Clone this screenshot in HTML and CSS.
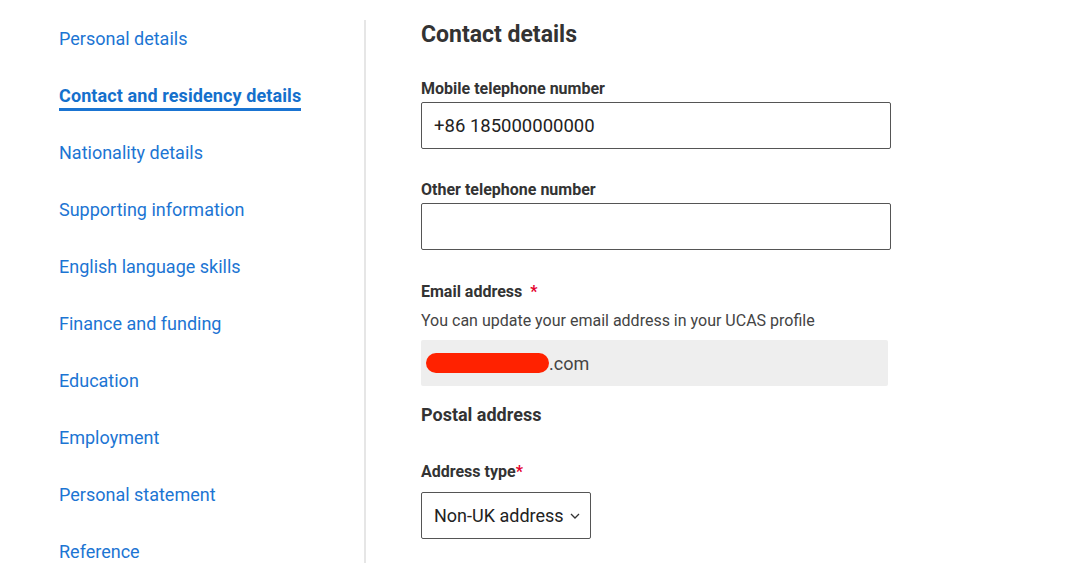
FILE: index.html
```html
<!DOCTYPE html>
<html>
<head>
<meta charset="utf-8">
<link rel="stylesheet" href="styles.css">
</head>
<body>
<div class="page">
  <nav class="sidebar">
    <ul class="nav">
      <li><a href="#">Personal details</a></li>
      <li class="active"><a href="#">Contact and residency details</a></li>
      <li><a href="#">Nationality details</a></li>
      <li><a href="#">Supporting information</a></li>
      <li><a href="#">English language skills</a></li>
      <li><a href="#">Finance and funding</a></li>
      <li><a href="#">Education</a></li>
      <li><a href="#">Employment</a></li>
      <li><a href="#">Personal statement</a></li>
      <li><a href="#">Reference</a></li>
    </ul>
  </nav>
  <main class="content">
    <h1 class="title">Contact details</h1>
    <div class="field">
      <label class="label">Mobile telephone number</label>
      <div class="input">+86 185000000000</div>
    </div>
    <div class="field">
      <label class="label">Other telephone number</label>
      <div class="input"></div>
    </div>
    <div class="field email">
      <label class="label">Email address <span class="req req-gap">*</span></label>
      <p class="hint">You can update your email address in your UCAS profile</p>
      <div class="readonly"><span class="redact"></span><span class="dom">.com</span></div>
    </div>
    <h2 class="subtitle">Postal address</h2>
    <div class="field">
      <label class="label">Address type<span class="req">*</span></label>
      <div class="select"><span>Non-UK address</span>
        <svg class="chev" width="10" height="6" viewBox="0 0 10 6"><path d="M1 1l4 4 4-4" fill="none" stroke="#333" stroke-width="1.3"/></svg>
      </div>
    </div>
  </main>
</div>
</body>
</html>
```

FILE: styles.css
```css
html, body {
  margin: 0;
  padding: 0;
  background: #fff;
  font-family: Roboto, "Liberation Sans", Arial, sans-serif;
  overflow: hidden;
}
.page {
  display: flex;
  height: 563px;
}
.sidebar {
  width: 366px;
  border-right: 2px solid #e6e6e6;
  margin-top: 20px;
  box-sizing: border-box;
  flex-shrink: 0;
}
.nav {
  list-style: none;
  margin: 0;
  padding: 0 0 0 59px;
  margin-top: -10px;
}
.nav li {
  height: 57px;
  display: flex;
  align-items: center;
}
.nav a {
  color: #1c75d3;
  text-decoration: none;
  font-size: 18px;
  line-height: 24px;
}
.nav li.active a {
  font-weight: 700;
  color: #1470cc;
  border-bottom: 3px solid #1a74d2;
  padding-bottom: 0;
  margin-top: 3px;
  letter-spacing: 0.1px;
}
.content {
  padding-left: 55px;
  padding-top: 21px;
  color: #333;
}
.title {
  margin: 0;
  font-size: 23px;
  line-height: 28px;
  font-weight: 700;
  color: #333;
}
.field {
  display: flex;
  flex-direction: column;
}
.title + .field {
  margin-top: 30px;
}
.label {
  font-size: 16px;
  font-weight: 700;
  line-height: 20px;
  color: #333;
  margin-bottom: 3px;
}
.input {
  width: 470px;
  height: 47px;
  box-sizing: border-box;
  border: 1px solid #555;
  border-radius: 2px;
  padding: 0 12px;
  display: flex;
  align-items: center;
  font-size: 18.5px;
  color: #222;
}
.field + .field {
  margin-top: 31px;
}
.field + .field.email {
  margin-top: 32px;
}
.req {
  color: #e4002b;
}
.req-gap {
  margin-left: 4px;
}
.hint {
  margin: 6px 0 9px;
  font-size: 16px;
  line-height: 20px;
  color: #444;
}
.readonly {
  width: 467px;
  height: 46px;
  background: #eeeeee;
  border-radius: 2px;
  display: flex;
  align-items: center;
  padding-left: 5px;
  box-sizing: border-box;
}
.redact {
  display: inline-block;
  width: 123px;
  height: 20px;
  background: #ff2200;
  border-radius: 10px;
}
.dom {
  font-size: 18px;
  color: #444;
}
.subtitle {
  margin: 19px 0 0;
  font-size: 18px;
  line-height: 20px;
  font-weight: 700;
  color: #333;
}
.subtitle + .field {
  margin-top: 37px;
}
.subtitle + .field .label {
  margin-bottom: 10px;
}
.select {
  align-self: flex-start;
  height: 47px;
  box-sizing: border-box;
  border: 1px solid #555;
  border-radius: 2px;
  padding: 0 10px 0 12px;
  display: flex;
  align-items: center;
  white-space: nowrap;
  font-size: 18px;
  color: #222;
}
.chev {
  margin-left: 6px;
}
```
